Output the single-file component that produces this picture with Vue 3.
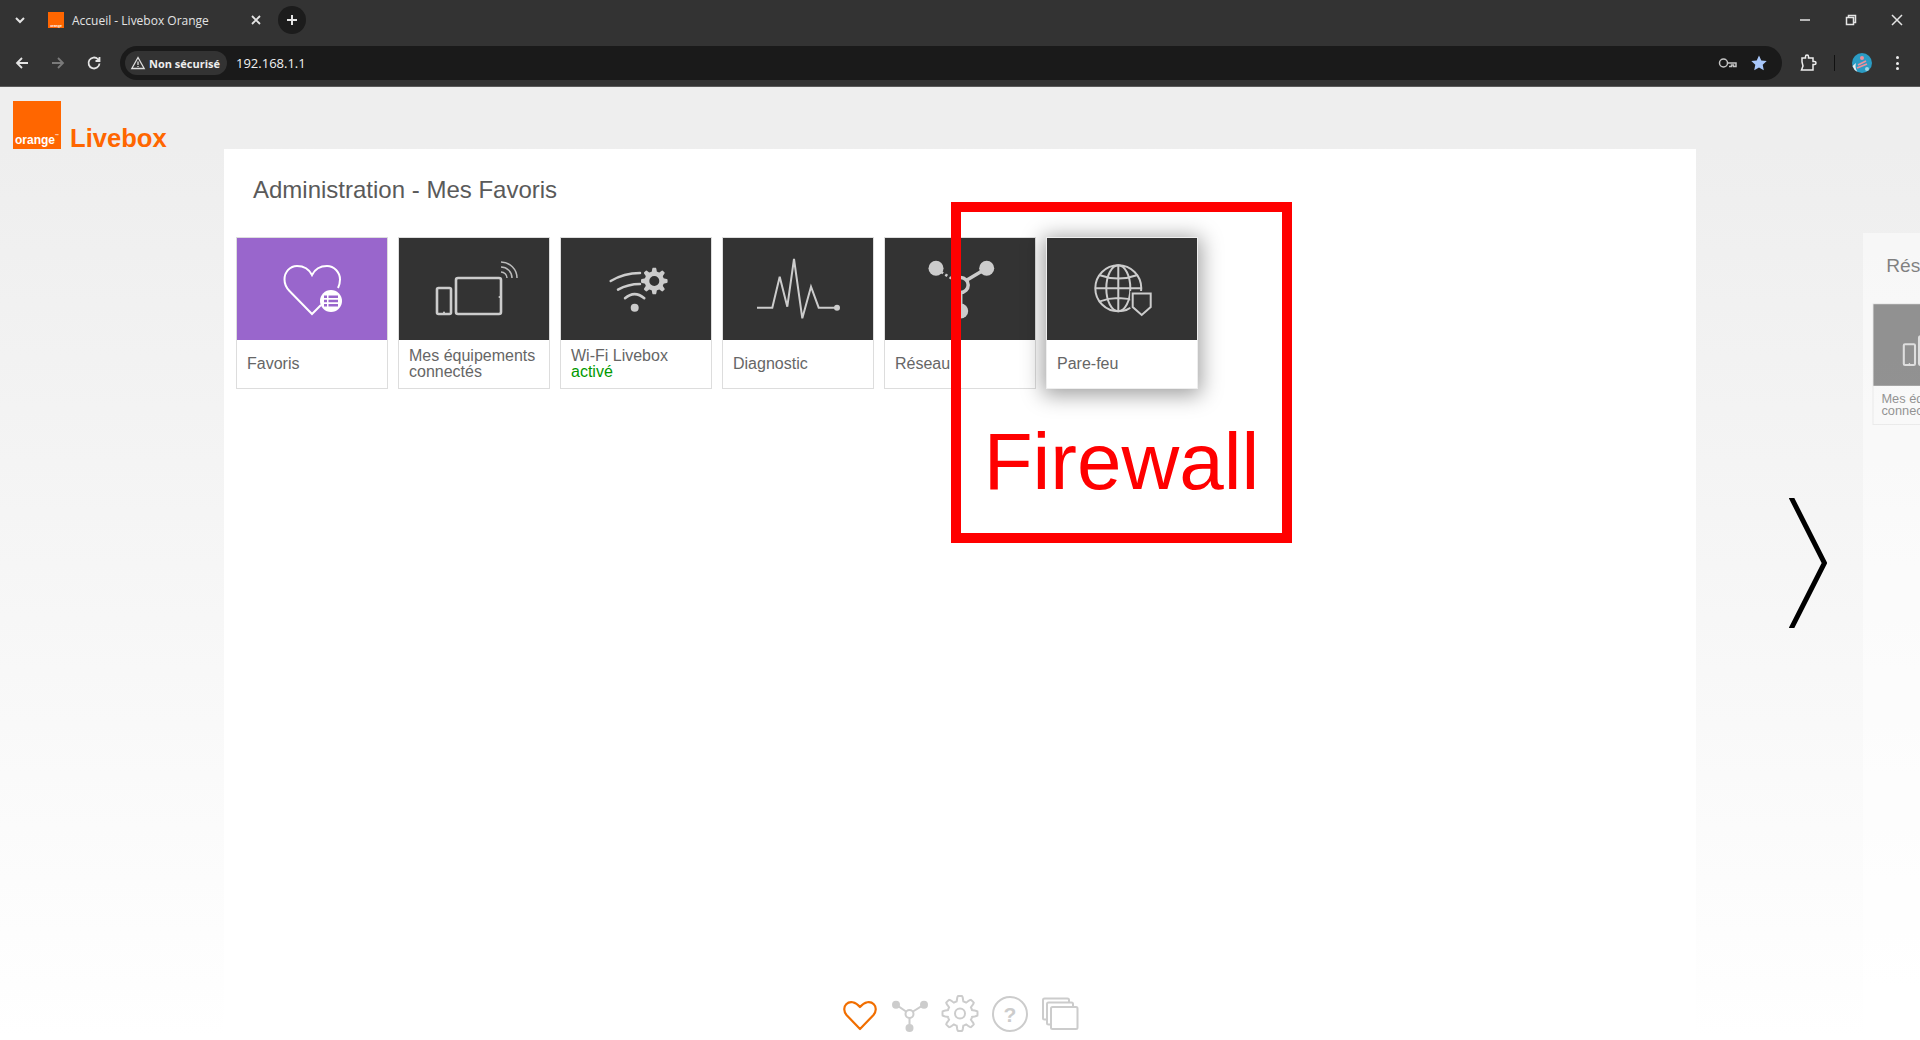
<script setup>
// main panel tiles, the next panel only peeks in at the right edge
const panels = [
  {
    title: 'Administration - Mes Favoris',
    tiles: [
      { icon: 'heart', label: ['Favoris'], purple: true },
      { icon: 'devices', label: ['Mes équipements', 'connectés'] },
      { icon: 'wifi', label: ['Wi-Fi Livebox'], status: 'activé' },
      { icon: 'pulse', label: ['Diagnostic'] },
      { icon: 'network', label: ['Réseau'] },
      { icon: 'globe', label: ['Pare-feu'], selected: true }
    ]
  },
  {
    title: 'Résumé',
    next: true,
    tiles: [{ icon: 'devices', label: ['Mes équipements', 'connectés'] }]
  }
];

// gear outline with 8 rounded teeth
const gear = (cx, cy, r, amp) => {
  let d = '';
  for (let i = 0; i < 160; i++) {
    const a = (i / 160) * Math.PI * 2;
    const wave = Math.max(-1, Math.min(1, Math.cos(a * 8) * 2));
    const rad = r + amp * wave;
    d += `${i ? 'L' : 'M'}${(cx + rad * Math.cos(a)).toFixed(2)} ${(cy + rad * Math.sin(a)).toFixed(2)}`;
  }
  return d + 'Z';
};
</script>

<template>
  <div class="window">
    <div class="tabstrip">
      <svg class="tab-list" width="12" height="12" viewBox="0 0 12 12"><path d="M2 4l4 4 4-4" /></svg>
      <div class="favicon"><span>orange</span></div>
      <span class="tab-title">Accueil - Livebox Orange</span>
      <svg class="tab-close" width="12" height="12" viewBox="0 0 12 12"><path d="M2 2l8 8M10 2l-8 8" /></svg>
      <div class="new-tab">
        <svg width="14" height="14" viewBox="0 0 14 14"><path d="M7 2v10M2 7h10" /></svg>
      </div>
      <div class="win-controls">
        <svg width="12" height="12" viewBox="0 0 12 12"><path d="M1 6h10" /></svg>
        <svg width="12" height="12" viewBox="0 0 12 12"><path d="M1.5 3.5h7v7h-7zM3.5 3.5v-2h7v7h-2" /></svg>
        <svg width="12" height="12" viewBox="0 0 12 12"><path d="M1 1l10 10M11 1L1 11" /></svg>
      </div>
    </div>

    <div class="toolbar">
      <svg class="nav-btn" width="16" height="16" viewBox="0 0 16 16"><path d="M14 8H3M8 3L3 8l5 5" /></svg>
      <svg class="nav-btn dim" width="16" height="16" viewBox="0 0 16 16"><path d="M2 8h11M8 3l5 5-5 5" /></svg>
      <svg class="nav-btn" width="16" height="16" viewBox="0 0 16 16"><path d="M13.5 8.5a5.5 5.5 0 1 1-1.6-4.4L13.5 6M13.5 2v4h-4" /></svg>
      <div class="omnibox">
        <div class="not-secure">
          <svg width="16" height="16" viewBox="0 0 16 16"><path d="M8 2.5L14.2 13.5H1.8zM8 6.5v3.500M8 11v1" /></svg>
          <span>Non sécurisé</span>
        </div>
        <span class="url">192.168.1.1</span>
        <div class="omni-right">
          <svg class="key" width="20" height="14" viewBox="0 0 20 14">
            <circle cx="5.5" cy="7" r="4" />
            <path d="M9.5 7H18v3.500h-2.500V9h-2v1.500H11" />
          </svg>
          <svg width="18" height="18" viewBox="0 0 18 18"><path class="star" d="M9 1.5l2.3 5 5.4.6-4 3.7 1.1 5.4L9 13.5l-4.8 2.700 1.1-5.4-4-3.700 5.4-.6z" /></svg>
        </div>
      </div>
      <svg class="ext" width="18" height="18" viewBox="0 0 18 18"><path d="M3 4h3.5V2.5a1.5 1.5 0 0 1 3 0V4H14v3.5h1.5a1.5 1.5 0 0 1 0 3H14V16H2.5l1.5-4-1-4z" /></svg>
      <div class="divider"></div>
      <svg class="avatar" width="20" height="20" viewBox="0 0 20 20">
        <circle cx="10" cy="10" r="10" fill="#2b9cc4" />
        <path d="M0.5 13a10 10 0 0 0 5 6c-2-3-2.500-6-1.500-9z" fill="#e8eef2" />
        <path d="M5 15l10-4M6 12l8-4" stroke="#ef8f9b" stroke-width="1.8" fill="none" />
        <circle cx="10" cy="5" r="2" fill="#ef8f9b" />
        <circle cx="15" cy="16" r="2" fill="#9fd6e6" />
      </svg>
      <div class="menu-dots"><i></i><i></i><i></i></div>
    </div>

    <div class="page">
      <header class="brand">
        <div class="logo"><span>orange<sup>™</sup></span></div>
        <span class="brand-name">Livebox</span>
      </header>

      <main class="carousel">
        <section v-for="panel in panels" :key="panel.title" class="panel" :class="{ next: panel.next }">
          <h2>{{ panel.title }}</h2>
          <div class="tiles">
            <div
              v-for="tile in panel.tiles"
              :key="tile.icon"
              class="tile"
              :class="{ selected: tile.selected }"
            >
              <div class="tile-icon" :class="{ purple: tile.purple }">
                <svg width="150" height="102" viewBox="0 0 150 102">
                  <g v-if="tile.icon === 'heart'" class="white-line">
                    <path d="M101 50C102.5 47 103 44.5 103 41.5 103 34 97 28 90 28 84 28 78 31 75 37 72 31 66 28 60 28 53 28 47.5 34 47.5 41.5 47.5 46 49.5 50 52.5 53L75 76 84 67" />
                    <circle class="badge" cx="94" cy="63" r="11" />
                    <path class="badge-list" d="M87 58.7h3M91.5 58.7H101M87 63h3M91.5 63H101M87 67.3h3M91.5 67.3H101" />
                  </g>
                  <g v-else-if="tile.icon === 'devices'" class="grey-line">
                    <rect class="body" x="38" y="50" width="14" height="26" rx="1.5" />
                    <rect class="body" x="57" y="40" width="45" height="36" rx="2" />
                    <circle class="grey-fill" cx="45" cy="74.5" r="1" />
                    <circle class="grey-fill" cx="100.5" cy="59" r="1" />
                    <path class="thin" d="M102 24a16 16 0 0 1 16 16M102 29a11 11 0 0 1 11 11M102 34a6 6 0 0 1 6 6" />
                  </g>
                  <g v-else-if="tile.icon === 'wifi'" class="grey-line">
                    <circle class="grey-fill" cx="73.7" cy="69.7" r="4" />
                    <path class="arc" d="M64 60.3Q73.5 52 83.3 60.3M57 51.7Q67 46 79 46M49.7 43Q63 35 79 35" />
                    <path class="grey-fill" fill-rule="evenodd" :d="gear(93.3, 43, 11.5, 1.8) + 'M98.3 43a5 5 0 1 0-10 0a5 5 0 1 0 10 0Z'" />
                  </g>
                  <g v-else-if="tile.icon === 'pulse'" class="grey-line">
                    <path d="M34 69.7H49.3L56.7 38.7 64.3 68.7 71 21 79.3 80.3 88 48.7 95.7 69.7H114" />
                    <circle class="grey-fill" cx="114" cy="69.7" r="3" />
                  </g>
                  <g v-else-if="tile.icon === 'network'" class="grey-line">
                    <path class="dotted" d="M56 34L69 42" />
                    <path class="thick" d="M82 42L101.7 30.3M75.7 55V73" />
                    <circle class="thick" cx="75.7" cy="47" r="7.5" />
                    <circle class="grey-fill" cx="51" cy="30.3" r="7.5" />
                    <circle class="grey-fill" cx="101.7" cy="30.3" r="7.5" />
                    <circle class="grey-fill" cx="75.7" cy="73" r="7.5" />
                  </g>
                  <g v-else class="grey-line">
                    <circle cx="71.3" cy="50.3" r="23" />
                    <ellipse cx="71.3" cy="50.3" rx="12" ry="23" />
                    <path d="M71.3 27.3v46M48.3 50.3h46M52 37q19.3 7 38.6 0M52 63.6q19.3-7 38.6 0" />
                    <path class="shield-gap" d="M85.7 55.5h18v13.5L94.7 77l-9-8z" />
                    <path class="shield" d="M85.7 55.5h18v13.5L94.7 77l-9-8z" />
                  </g>
                </svg>
              </div>
              <div class="tile-label">
                <span v-for="line in tile.label" :key="line">{{ line }}</span>
                <span v-if="tile.status" class="status">{{ tile.status }}</span>
              </div>
            </div>
          </div>
        </section>
      </main>

      <svg class="next-arrow" width="38" height="130" viewBox="0 0 38 130">
        <path d="M1 -3L35.5 65 1 133" />
      </svg>

      <nav class="bottom-nav">
        <svg width="40" height="40" viewBox="0 0 40 40">
          <path class="orange-line" d="M20 35L6.500 21C3.800 17.800 3.400 13 6.200 10.200 9.500 6.900 15.500 7.400 20 13 24.500 7.400 30.500 6.900 33.800 10.200 36.600 13 36.200 17.800 33.500 21z" />
        </svg>
        <svg width="40" height="40" viewBox="0 0 40 40">
          <path class="nav-line" d="M6 10.7L16 17.5M34 10.7L23 17.5M19.5 24V34" />
          <circle class="nav-line" cx="19.5" cy="20" r="4" />
          <circle class="nav-fill" cx="6" cy="10.7" r="4" />
          <circle class="nav-fill" cx="34" cy="10.7" r="4" />
          <circle class="nav-fill" cx="19.5" cy="34" r="4" />
        </svg>
        <svg width="40" height="40" viewBox="0 0 40 40">
          <path class="nav-line" :d="gear(20, 19.5, 15, 2.5)" />
          <circle class="nav-line" cx="20" cy="19.5" r="5" />
        </svg>
        <svg width="40" height="40" viewBox="0 0 40 40">
          <circle class="nav-line" cx="20" cy="20" r="17" />
          <text class="help" x="20" y="27.5" text-anchor="middle">?</text>
        </svg>
        <svg width="40" height="40" viewBox="0 0 40 40">
          <rect class="nav-line stack" x="3" y="4.5" width="26" height="21" rx="1.5" />
          <rect class="nav-line stack" x="7" y="8.5" width="26" height="22" rx="1.5" />
          <rect class="nav-line stack" x="11" y="13" width="26.5" height="22" rx="1.5" />
        </svg>
      </nav>

      <div class="annotation"><span>Firewall</span></div>
    </div>
  </div>
</template>

<style>
html,
body {
  margin: 0;
  overflow: hidden;
}
</style>

<style scoped>
.window {
  width: 1920px;
  height: 1040px;
  display: flex;
  flex-direction: column;
  font-family: 'Liberation Sans', Arial, sans-serif;
  overflow: hidden;
}

/* browser chrome */
.tabstrip {
  height: 40px;
  background: #333;
  display: flex;
  align-items: center;
  color: #e8e8e8;
  flex: none;
}

.tabstrip svg path,
.nav-btn path {
  fill: none;
  stroke: #e4e4e4;
  stroke-width: 1.5;
}

.tab-list {
  margin-left: 14px;
}

.tab-list path {
  stroke-width: 2 !important;
}

.favicon {
  width: 16px;
  height: 16px;
  margin-left: 22px;
  background: #f60;
  color: #fff;
  font-size: 3.5px;
  font-weight: bold;
  display: flex;
  align-items: flex-end;
  justify-content: center;
}

.tab-title {
  margin-left: 8px;
  width: 178px;
  font-family: 'Open Sans', sans-serif;
  font-size: 12px;
  color: #e3e3e3;
}

.tab-close path {
  stroke-width: 1.8 !important;
}

.new-tab {
  width: 28px;
  height: 28px;
  margin-left: 16px;
  border-radius: 50%;
  background: #1c1c1c;
  display: flex;
  align-items: center;
  justify-content: center;
}

.new-tab path {
  stroke-width: 2 !important;
}

.win-controls {
  margin-left: auto;
  margin-right: 17px;
  display: flex;
  gap: 34px;
}

.toolbar {
  height: 47px;
  box-sizing: border-box;
  background: #333;
  border-bottom: 1px solid #5a5a5a;
  display: flex;
  align-items: center;
  flex: none;
}

.nav-btn {
  margin-left: 14px;
  margin-right: 6px;
}

.nav-btn path {
  stroke-width: 1.8;
}

.nav-btn.dim path {
  stroke: #7a7a7a;
}

.omnibox {
  width: 1662px;
  height: 34px;
  margin-left: 12px;
  border-radius: 17px;
  background: #1a1a1a;
  display: flex;
  align-items: center;
  box-sizing: border-box;
  padding: 0 14px 0 5px;
}

.not-secure {
  height: 24px;
  width: 102px;
  box-sizing: border-box;
  padding-left: 5px;
  border-radius: 12px;
  background: #333;
  display: flex;
  align-items: center;
  gap: 3px;
  font-family: 'Open Sans', sans-serif;
  font-weight: 700;
  font-size: 11px;
  color: #eee;
  white-space: nowrap;
}

.not-secure path {
  fill: none;
  stroke: #ddd;
  stroke-width: 1.3;
}

.url {
  margin-left: 9px;
  font-family: 'Open Sans', sans-serif;
  font-size: 13px;
  color: #f1f1f1;
}

.omni-right {
  margin-left: auto;
  display: flex;
  align-items: center;
  gap: 12px;
}

.key * {
  fill: none;
  stroke: #c4c4c4;
  stroke-width: 1.5;
}

.star {
  fill: #a8c7fa;
}

.ext {
  margin-left: 17px;
}

.ext path {
  fill: none;
  stroke: #eee;
  stroke-width: 1.5;
}

.divider {
  width: 1px;
  height: 16px;
  margin-left: 17px;
  background: #111;
}

.avatar {
  margin-left: 17px;
}

.menu-dots {
  margin-left: 24px;
  display: flex;
  flex-direction: column;
  gap: 2.5px;
}

.menu-dots i {
  width: 3px;
  height: 3px;
  border-radius: 50%;
  background: #eee;
}

/* page */
.page {
  flex: 1;
  min-height: 0;
  position: relative;
  display: flex;
  flex-direction: column;
  background: linear-gradient(#eeeeee 60px, #ffffff 950px);
}

.brand {
  height: 62px;
  flex: none;
  box-sizing: border-box;
  padding: 13px 0 0 13px;
  display: flex;
  align-items: flex-end;
  gap: 9px;
}

.logo {
  width: 48px;
  height: 48px;
  background: #f60;
  color: #fff;
  font-size: 12px;
  font-weight: bold;
  display: flex;
  align-items: flex-end;
  padding-left: 2px;
  box-sizing: border-box;
  line-height: 17px;
}

.logo sup {
  font-size: 4px;
  vertical-align: 7px;
  line-height: 0;
}

.brand-name {
  color: #f60;
  font-size: 25.6px;
  font-weight: bold;
  line-height: 26px;
  margin-bottom: -2px;
}

.carousel {
  flex: 1;
  min-height: 0;
  display: flex;
  gap: 167px;
  padding-left: 224px;
  overflow: hidden;
}

.panel {
  width: 1472px;
  flex: none;
  box-sizing: border-box;
  padding: 0 12px;
  background: #fff;
}

.panel.next {
  height: 1000px;
  margin-top: 84px;
  transform: scale(0.8);
  transform-origin: top left;
  opacity: 0.5;
}

h2 {
  margin: 0 0 33px 17px;
  padding-top: 27px;
  font-size: 24px;
  line-height: 28px;
  font-weight: normal;
  color: #5a5a5a;
}

.panel.next h2 {
  color: #111;
}

.tiles {
  display: flex;
  gap: 10px;
}

.tile {
  width: 152px;
  height: 152px;
  box-sizing: border-box;
  border: 1px solid #ddd;
  background: #fff;
}

.tile.selected {
  border-color: #eee;
  box-shadow: 0 3px 20px 3px rgba(0, 0, 0, 0.38);
}

.tile-icon {
  height: 102px;
  background: #333;
}

.tile-icon svg {
  display: block;
}

.tile-icon.purple {
  background: #96c;
}

.tile-label {
  height: 48px;
  box-sizing: border-box;
  padding-left: 10px;
  display: flex;
  flex-direction: column;
  justify-content: center;
  font-size: 16px;
  line-height: 16px;
  color: #666;
}

.panel.next .tile-label {
  color: #333;
}

.status {
  color: #090;
}

/* tile icons */
.white-line > path:first-child {
  fill: none;
  stroke: #fff;
  stroke-width: 2;
}

.badge {
  fill: #fff;
}

.badge-list {
  fill: none;
  stroke: #96c;
  stroke-width: 2.5;
}

.grey-line > * {
  fill: none;
  stroke: #ccc;
  stroke-width: 2;
}

.grey-line > .grey-fill {
  fill: #ccc;
  stroke: none;
}

.grey-line > .body {
  stroke-width: 2.6;
}

.grey-line > .thin {
  stroke-width: 1.5;
  stroke: #bbb;
}

.grey-line > .arc {
  stroke-width: 2.5;
  stroke-linecap: round;
}

.grey-line > .thick {
  stroke-width: 3.5;
}

.grey-line > .dotted {
  stroke-width: 2.5;
  stroke-dasharray: 2.5 2.5;
}

.grey-line > .shield-gap {
  fill: #333;
  stroke: #333;
  stroke-width: 5;
}

.grey-line > .shield {
  fill: #333;
}

/* overlay bits */
.next-arrow {
  position: absolute;
  left: 1789px;
  top: 411px;
}

.next-arrow path {
  fill: none;
  stroke: #000;
  stroke-width: 5;
}

.bottom-nav {
  position: absolute;
  left: 0;
  right: 0;
  bottom: 6px;
  display: flex;
  justify-content: center;
  gap: 10px;
}

.orange-line {
  fill: none;
  stroke: #f16e00;
  stroke-width: 2.2;
  stroke-linejoin: round;
}

.nav-line {
  fill: none;
  stroke: #ccc;
  stroke-width: 2;
}

.nav-fill {
  fill: #ccc;
}

.stack {
  fill: #fff;
}

.help {
  fill: #ccc;
  font-size: 21px;
  font-weight: bold;
  font-family: 'Liberation Sans', Arial, sans-serif;
}

.annotation {
  position: absolute;
  left: 951px;
  top: 115px;
  width: 341px;
  height: 341px;
  box-sizing: border-box;
  border: 10px solid #f00;
  display: flex;
  align-items: flex-end;
  justify-content: center;
}

.annotation span {
  color: #f00;
  font-size: 80px;
  line-height: 92px;
  margin-bottom: 25px;
}
</style>
